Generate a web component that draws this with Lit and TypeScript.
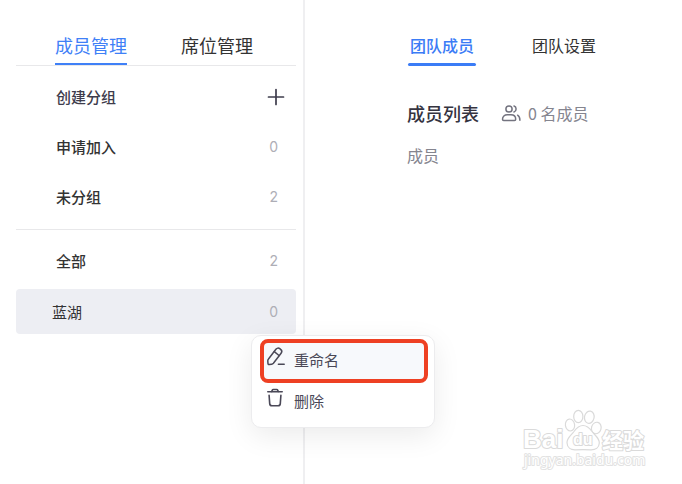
import { LitElement, html, css, svg } from "lit";
import { customElement } from "lit/decorators.js";
import { classMap } from "lit/directives/class-map.js";

const plusIcon = svg`<svg class="plus" width="18" height="18" viewBox="0 0 18 18" fill="none" stroke="#3e3c4c" stroke-width="1.7" stroke-linecap="round" aria-hidden="true"><path d="M9 1.5v15M1.5 9h15"/></svg>`;

const membersIcon = svg`<svg width="20" height="20" viewBox="0 0 20 20" fill="none" stroke="#73737f" stroke-width="1.5" stroke-linecap="round" stroke-linejoin="round" aria-hidden="true"><circle cx="8" cy="6" r="3.1"/><path d="M2.700 17.400h10.800c.8 0 1.200-.4 1.200-1.200 0-2.600-2-4.400-4.800-4.400H6.300c-2.800 0-4.800 1.800-4.800 4.400 0 .8.400 1.200 1.200 1.200z"/><path d="M13 3c1.300.4 2.100 1.500 2.100 3S14.300 8.600 13 9"/><path d="M16.600 12.200c1.600.9 2.300 2.500 2.300 5.100"/></svg>`;

const pencilIcon = svg`<svg width="20" height="22" viewBox="0 0 20 22" fill="none" stroke="#4a4857" stroke-width="1.5" stroke-linecap="round" stroke-linejoin="round" aria-hidden="true"><path d="M2.300 13.300L9.900 3.300c1-1.300 2.600-1.600 3.900-.6l.8.6c1.300 1 1.500 2.600.5 3.900L7.400 17.200c-.5.600-1 .9-1.700 1l-2.500.4c-.7.100-1.200-.3-1.200-1l-.2-2.600c0-.6.100-1.200.5-1.700z"/><path d="M8.300 5.600l4.700 3.900"/><path d="M12.400 18.200h5.800"/></svg>`;

const trashIcon = svg`<svg width="20" height="22" viewBox="0 0 20 22" fill="none" stroke="#4a4857" stroke-width="1.600" stroke-linecap="round" stroke-linejoin="round" aria-hidden="true"><path d="M1.800 4.800h14.400"/><path d="M5.700 4.500l.6-1.300c.2-.5.500-.7 1-.7h3.400c.5 0 .8.200 1 .7l.6 1.300"/><path d="M3.100 8.300l.6 8.300c.1 1.400.9 2.100 2.300 2.100h6c1.400 0 2.200-.7 2.300-2.100l.6-8.300"/></svg>`;

@customElement("app-root")
export class AppRoot extends LitElement {
  static styles = css`
    :host {
      display: flex;
      position: relative;
      min-height: 100vh;
      overflow: hidden;
      background: #fff;
      color: #333;
      font: 15px/24px "Noto Sans CJK SC", "Noto Sans", sans-serif;
    }
    * {
      box-sizing: border-box;
    }
    button {
      margin: 0;
      padding: 0;
      border: 0;
      background: none;
      color: inherit;
      font: inherit;
      text-align: left;
      cursor: pointer;
    }
    svg {
      display: block;
      flex: none;
    }
    h1,
    p {
      margin: 0;
    }

    .side {
      flex: none;
      width: 305px;
      padding: 31px 7px 0 16px;
      border-right: 2px solid #efeff1;
    }
    .side-tabs {
      display: flex;
      gap: 54px;
      height: 35px;
      padding-left: 39px;
      border-bottom: 1px solid #e8e8ea;
    }
    .side-tab {
      height: 34px;
      padding-bottom: 4px;
      border-bottom: 2px solid transparent;
      font-size: 18px;
    }
    .side-tab.on {
      border-color: #3f80f7;
      color: #3f80f7;
    }
    .groups {
      display: flex;
      flex-direction: column;
      padding-top: 6px;
    }
    .row {
      display: flex;
      align-items: center;
      justify-content: space-between;
      width: 100%;
      height: 50px;
      padding: 0 18px 0 40px;
      font-weight: 500;
    }
    .create {
      padding-right: 11px;
      color: #3e3c4c;
    }
    .count {
      color: #aeaeb6;
      font: 14px/24px Inter, sans-serif;
    }
    .rule {
      width: 100%;
      height: 1px;
      margin: 7px 0 6px;
      border: 0;
      background: #e8e8ea;
    }
    .current {
      position: relative;
      margin-top: 3px;
    }
    .current .row {
      height: 45px;
      padding-left: 36px;
      border-radius: 4px;
      background: #edeef3;
      font-weight: 400;
    }

    .menu {
      position: absolute;
      z-index: 1;
      top: 46px;
      left: 235px;
      width: 184px;
      padding: 3px 6px 4px 8px;
      border: 1px solid #ececee;
      border-radius: 10px;
      background: #fff;
      box-shadow: 0 8px 28px rgba(0, 0, 0, 0.08);
    }
    .item {
      display: flex;
      gap: 8px;
      width: 100%;
      height: 40px;
      padding: 4px 6px;
      color: #4a4857;
    }
    .item span {
      padding-top: 2px;
    }
    .item.marked {
      height: 44px;
      padding: 3px 2px;
      border: 4px solid #ee4023;
      border-radius: 8px;
      background: #f7f9fc;
    }

    .main {
      flex: 1;
      min-width: 0;
      padding: 33px 24px 0 102px;
    }
    .main-tabs {
      display: flex;
      gap: 54px;
      padding-left: 1px;
      font-size: 16px;
    }
    .main-tab {
      position: relative;
      height: 33px;
      padding: 0 2px 9px;
    }
    .main-tab.on {
      color: #3b7cf6;
      font-weight: 500;
    }
    .main-tab.on::after {
      content: "";
      position: absolute;
      right: 0;
      bottom: 0;
      left: 0;
      height: 3px;
      border-radius: 2px;
      background: #3b7cf6;
    }
    .heading {
      display: flex;
      align-items: center;
      gap: 22px;
      padding-top: 35px;
    }
    h1 {
      color: #35333f;
      font-size: 18px;
      font-weight: 500;
    }
    .total {
      display: flex;
      align-items: center;
      gap: 7px;
      color: #85858f;
      font-size: 16px;
    }
    .column {
      padding-top: 18px;
      color: #85858f;
      font-size: 16px;
    }

    .mark {
      position: absolute;
      right: 32px;
      bottom: 12px;
      pointer-events: none;
    }
    .mark text {
      fill: #fff;
      stroke: #dadada;
      stroke-width: 2px;
      paint-order: stroke;
      stroke-linejoin: round;
    }
    .mark .latin {
      font: bold 26px "Liberation Sans", sans-serif;
    }
    .mark .du {
      font: bold 16px "Liberation Sans", sans-serif;
    }
    .mark .han {
      font: bold 21px "Noto Sans CJK SC", sans-serif;
    }
    .mark .site {
      font: 14px "Noto Sans", sans-serif;
      stroke: #e2e2e2;
    }
  `;

  private groups = [
    { name: "申请加入", count: 0 },
    { name: "未分组", count: 2 },
  ];

  private row(name: string, count: number) {
    return html`<button class="row">
      <span>${name}</span><span class="count">${count}</span>
    </button>`;
  }

  private tabs(kind: string, names: string[]) {
    return html`<div class="${kind}-tabs" role="tablist">
      ${names.map(
        (name, i) => html`<button
          role="tab"
          aria-selected=${i === 0 ? "true" : "false"}
          class=${classMap({ [`${kind}-tab`]: true, on: i === 0 })}
        >${name}</button>`
      )}
    </div>`;
  }

  render() {
    return html`
      <aside class="side">
        ${this.tabs("side", ["成员管理", "席位管理"])}
        <nav class="groups">
          <button class="row create"><span>创建分组</span>${plusIcon}</button>
          ${this.groups.map((g) => this.row(g.name, g.count))}
          <hr class="rule" />
          ${this.row("全部", 2)}
          <div class="current">
            ${this.row("蓝湖", 0)}
            <div class="menu" role="menu">
              <button class="item marked" role="menuitem">${pencilIcon}<span>重命名</span></button>
              <button class="item" role="menuitem">${trashIcon}<span>删除</span></button>
            </div>
          </div>
        </nav>
      </aside>
      <main class="main">
        ${this.tabs("main", ["团队成员", "团队设置"])}
        <div class="heading">
          <h1>成员列表</h1>
          <div class="total">${membersIcon}<span>0 名成员</span></div>
        </div>
        <p class="column">成员</p>
      </main>
      <svg class="mark" width="130" height="64" viewBox="0 0 130 64">
        <text class="latin" x="3" y="40">Bai</text>
        <g fill="#fff" stroke="#dadada" stroke-width="1.200">
          <ellipse cx="50" cy="17" rx="4.600" ry="6" transform="rotate(-8 50 17)"/>
          <ellipse cx="58.300" cy="8.500" rx="4.600" ry="6.200"/>
          <ellipse cx="69.300" cy="9.200" rx="4.800" ry="6.200" transform="rotate(12 69.300 9.200)"/>
          <ellipse cx="76.300" cy="20" rx="4.800" ry="5.800" transform="rotate(16 76.300 20)"/>
          <path d="M63 17.500c4.500 0 6.500 2.500 9 6 3 4 7.500 6.500 7.300 11.500-.2 4.500-3.800 7-8.800 6.800-5-.2-10-.2-15 0-5 .2-8.300-2.600-8.500-7-.2-4.800 4-7.300 7-11.300 2.500-3.500 4.500-6 9-6z"/>
        </g>
        <text class="du" x="53" y="37">du</text>
        <text class="han" x="82" y="40">经验</text>
        <text class="site" x="4" y="57">jingyan.baidu.com</text>
      </svg>
    `;
  }
}
